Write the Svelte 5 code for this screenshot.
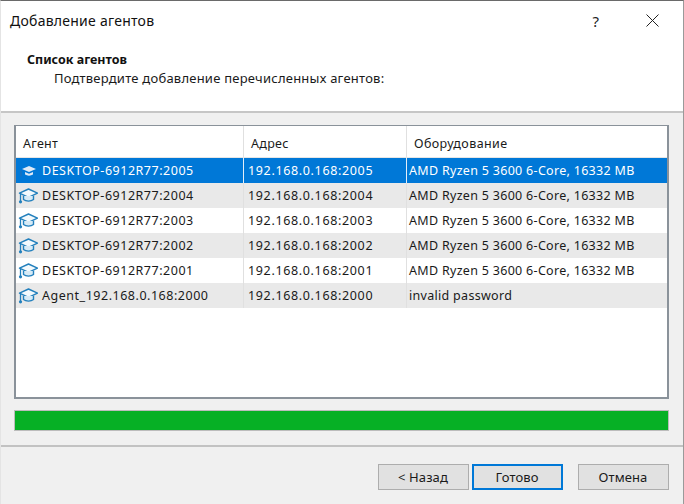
<script>
  const rows = [
    { name: 'DESKTOP-6912R77:2005', addr: '192.168.0.168:2005', hw: 'AMD Ryzen 5 3600 6-Core, 16332 MB', kind: 'sel' },
    { name: 'DESKTOP-6912R77:2004', addr: '192.168.0.168:2004', hw: 'AMD Ryzen 5 3600 6-Core, 16332 MB', kind: 'alt' },
    { name: 'DESKTOP-6912R77:2003', addr: '192.168.0.168:2003', hw: 'AMD Ryzen 5 3600 6-Core, 16332 MB', kind: '' },
    { name: 'DESKTOP-6912R77:2002', addr: '192.168.0.168:2002', hw: 'AMD Ryzen 5 3600 6-Core, 16332 MB', kind: 'alt' },
    { name: 'DESKTOP-6912R77:2001', addr: '192.168.0.168:2001', hw: 'AMD Ryzen 5 3600 6-Core, 16332 MB', kind: '' },
    { name: 'Agent_192.168.0.168:2000', addr: '192.168.0.168:2000', hw: 'invalid password', kind: 'alt' }
  ];
</script>

<div class="win">
  <div class="top">
    <div class="title">
      <span class="title-text">Добавление агентов</span>
      <span class="help">?</span>
      <svg class="close" width="13" height="13" viewBox="0 0 13 13"><path d="M.5.5l12 12M12.5.5l-12 12" stroke="#222" fill="none"/></svg>
    </div>
    <div class="h1">Список агентов</div>
    <div class="h2">Подтвердите добавление перечисленных агентов:</div>
  </div>
  <div class="body">
    <div class="table">
      <div class="row head">
        <div class="cell c1">Агент</div>
        <div class="cell c2">Адрес</div>
        <div class="cell c3">Оборудование</div>
      </div>
      {#each rows as r}
        <div class="row {r.kind}">
          <div class="cell c1">
            <svg class="cap" width="20" height="16" viewBox="0 0 20 16">
              {#if r.kind === 'sel'}
                <path d="M11 3L4 6l7 3 7-3z" fill="#dfeaf6"/>
                <path d="M7 9v2.5c2.2 1.5 5.8 1.5 8 0V9l-4 1.7z" fill="#dfeaf6"/>
                <path d="M3 7.5v6" stroke="#2a6db0" fill="none"/>
              {:else}
                <path d="M10.5 1L1.5 5.2l9 4.2 9-4.2z" fill="#f4fafd" stroke="#2380bd" stroke-width="1.4" stroke-linejoin="round"/>
                <path d="M5.5 8v3.5c2.6 2.2 7.4 2.2 10 0V8" fill="#d8ebf6" stroke="#2380bd" stroke-width="1.4"/>
                <path d="M2.5 6v7" stroke="#2380bd" stroke-width="1.3" fill="none"/>
                <circle cx="2.5" cy="13.8" r="1.6" fill="#2380bd"/>
              {/if}
            </svg>
            <span class="nm">{r.name}</span>
          </div>
          <div class="cell c2">{r.addr}</div>
          <div class="cell c3">{r.hw}</div>
        </div>
      {/each}
    </div>
    <div class="progress"></div>
  </div>
  <div class="footer">
    <button class="btn">&lt; Назад</button>
    <button class="btn primary">Готово</button>
    <button class="btn cancel">Отмена</button>
  </div>
</div>

<style>
  :global(body) { margin: 0; background: #f0f0f0; }
  .win {
    width: 684px; height: 504px; box-sizing: border-box;
    display: flex; flex-direction: column;
    font-family: "Noto Sans", "Open Sans", sans-serif;
    font-size: 12.5px; color: #1a1a1a;
    border-top: 1px solid #6a6a6a;
    border-right: 1px solid #9a9a9a;
    border-left: 1px solid #e4e4e4;
    background: #f0f0f0;
    overflow: hidden;
  }
  .top {
    flex: none; height: 112px; box-sizing: border-box; background: #fff;
    border-bottom: 2px solid #c6c6c6;
  }
  .title {
    height: 39px; display: flex; align-items: center;
    padding: 0 24px 0 9px;
  }
  .title-text { font-size: 14px; flex: 1; letter-spacing: 0.25px; color: #111; }
  .help { font-size: 15px; margin-right: 47px; color: #222; }
  .close { display: block; }
  .h1 { font-weight: 700; margin: 10px 0 0 26px; line-height: 19px; color: #111; }
  .h2 { margin-left: 53px; line-height: 19px; font-size: 13px; letter-spacing: 0.23px; }
  .body { flex: none; height: 332px; padding: 12px 14px 0 13px; box-sizing: border-box; }
  .table {
    height: 274px; box-sizing: border-box;
    border: solid #8a929a;
    background: #fff;
    border-width: 1px 2px 2px 2px;
  }
  .row { display: flex; height: 25px; box-sizing: border-box; }
  .row.head { height: 32px; background: #fff; border-bottom: 1px solid #e6e6e6; padding-top: 3px; }
  .row.alt { background: #e9e9e9; }
  .row.sel { background: #0078d7; color: #fff; }
  .cell {
    display: flex; align-items: center; box-sizing: border-box;
    white-space: nowrap; border-right: 1px solid #e0e0e0;
    letter-spacing: 0.3px;
  }
  .sel .cell { border-right-color: #e4eef8; }
  .head .cell { margin-top: -3px; padding-top: 3px; }
  .c1 { width: 228px; padding-left: 1px; }
  .c1 .nm { letter-spacing: 0.52px; }
  .c2 { width: 163px; padding-left: 4px; letter-spacing: 0.65px; }
  .c3 { flex: 1; padding-left: 2px; border-right: 0; }
  .head .c1 { padding-left: 7px; letter-spacing: 0.3px; }
  .head .c2 { padding-left: 7px; letter-spacing: 0.3px; }
  .head .c3 { padding-left: 7px; letter-spacing: 0.4px; }
  .cap { flex: none; margin: 0 4px 0 1px; }
  .progress {
    margin-top: 11px; height: 21px; box-sizing: border-box;
    background: #06b025; border: 1px solid #bcbcbc;
  }
  .footer {
    flex: 1; box-sizing: border-box; border-top: 2px solid #c2c2c2;
    display: flex; justify-content: flex-end; align-items: flex-start;
    padding: 17px 14px 0 0;
  }
  .btn {
    width: 91px; height: 26px; box-sizing: border-box;
    background: #e1e1e1; border: 1px solid #adadad;
    font: inherit; font-size: 13px; letter-spacing: 0.1px; color: #1a1a1a; padding: 0 1px 0 0;
  }
  .primary { border: 2px solid #0078d7; margin-left: 3px; }
  .cancel { margin-left: 15px; }
</style>
